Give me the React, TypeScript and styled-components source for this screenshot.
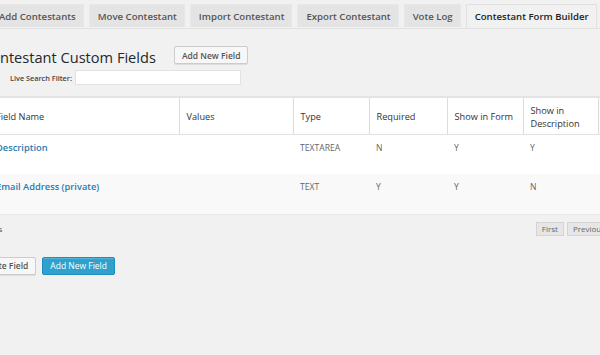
import React from "react";
import styled, { createGlobalStyle } from "styled-components";

const Global = createGlobalStyle`
  html, body { margin: 0; padding: 0; }
  body {
    background: #f1f1f1;
    font-family: "Open Sans", "Noto Sans", sans-serif;
    color: #444;
    width: 600px;
    height: 355px;
    overflow: hidden;
  }
`;

const Wrap = styled.div`
  margin-left: -30px;
  width: 690px;
`;

const TabBar = styled.div`
  display: flex;
  align-items: flex-end;
  gap: 5px;
  padding-top: 4px;
  margin-left: 20px;
  height: 24px;
  border-bottom: 1px solid #e2e2e2;
`;

const Tab = styled.div<{ $active?: boolean }>`
  height: ${(p) => (p.$active ? "24px" : "23px")};
  align-self: flex-start;
  box-sizing: border-box;
  padding: 0 7px 0 8px;
  display: flex;
  align-items: center;
  font-size: 9.6px;
  font-weight: 600;
  white-space: nowrap;
  color: ${(p) => (p.$active ? "#222" : "#555")};
  background: ${(p) => (p.$active ? "#f1f1f1" : "#e4e4e4")};
  border: 1px solid ${(p) => (p.$active ? "#e0e0e0" : "#e8e8e8")};
  border-bottom: none;
`;

const TitleRow = styled.div`
  display: flex;
  align-items: center;
  gap: 18px;
  margin-top: 14px;
  margin-left: 12px;
  height: 24px;
`;

const Title = styled.h2`
  margin: 0;
  font-size: 14.6px;
  font-weight: 400;
  color: #23282d;
  line-height: 24px;
  padding-top: 4px;
`;

const Button = styled.button<{ $primary?: boolean }>`
  font-family: "Open Sans", "Noto Sans", sans-serif;
  font-size: 8.5px;
  font-weight: ${(p) => (p.$primary ? 400 : 600)};
  height: 18px;
  padding: 0 7px;
  border-radius: 2px;
  cursor: pointer;
  color: ${(p) => (p.$primary ? "#fff" : "#555")};
  background: ${(p) => (p.$primary ? "#2ea2cc" : "#f7f7f7")};
  border: 1px solid ${(p) => (p.$primary ? "#1e8cbe" : "#ccc")};
  box-shadow: ${(p) =>
    p.$primary ? "inset 0 1px 0 rgba(120,200,230,.5)" : "0 1px 0 #ddd"};
`;

const SearchRow = styled.div`
  display: flex;
  align-items: center;
  gap: 3px;
  margin-top: 3px;
  margin-left: 40px;
`;

const Label = styled.label`
  font-size: 7.3px;
  font-weight: 600;
  color: #444;
`;

const SearchInput = styled.input`
  width: 166px;
  height: 15px;
  box-sizing: border-box;
  border: 1px solid #e2e2e2;
  background: #fff;
  padding: 0 4px;
`;

const Table = styled.table`
  margin-top: 11px;
  margin-left: 19px;
  border-collapse: collapse;
  background: #fff;
  border-top: 2px solid #e4e4e4;
  border-bottom: 1px solid #e9e9e9;
  table-layout: fixed;
  width: 640px;
`;

const Th = styled.th<{ $w: number }>`
  width: ${(p) => p.$w}px;
  box-sizing: border-box;
  height: 37px;
  padding: 2px 5px 0 7px;
  text-align: left;
  font-size: 9.2px;
  font-weight: 400;
  line-height: 13px;
  color: #333;
  border-bottom: 1px solid #e1e1e1;
  border-right: 1px solid #dcdcdc;
  vertical-align: middle;
`;

const Tr = styled.tr<{ $alt?: boolean }>`
  background: ${(p) => (p.$alt ? "#f9f9f9" : "#fff")};
`;

const Td = styled.td`
  height: 40px;
  box-sizing: border-box;
  padding: 8px 7px 0;
  vertical-align: top;
  font-size: 8.6px;
  color: #666;
  line-height: 10px;
`;

const NameLink = styled.a`
  font-size: 9.3px;
  font-weight: 600;
  color: #2a7ab0;
  text-decoration: none;
`;

const Footer = styled.div`
  display: flex;
  align-items: center;
  justify-content: space-between;
  margin-top: 7px;
  margin-left: 5px;
  width: 654px;
`;

const Count = styled.span`
  font-size: 8px;
  color: #555;
`;

const Pager = styled.div`
  display: flex;
  gap: 3px;
  margin-right: 18px;
`;

const PageBtn = styled.span`
  font-size: 8px;
  color: #666;
  background: #e6e6e6;
  border: 1px solid #d4d4d4;
  padding: 1px 5px;
  height: 10px;
  line-height: 10px;
`;

const Actions = styled.div`
  display: flex;
  gap: 6px;
  margin-top: 21px;
  margin-left: 2px;
`;

export default function App() {
  const cols = [190, 114, 76, 78, 76, 75, 31];
  return (
    <>
      <Global />
      <Wrap>
        <TabBar>
          <Tab>Add Contestants</Tab>
          <Tab>Move Contestant</Tab>
          <Tab>Import Contestant</Tab>
          <Tab>Export Contestant</Tab>
          <Tab>Vote Log</Tab>
          <Tab $active>Contestant Form Builder</Tab>
        </TabBar>
        <TitleRow>
          <Title>Contestant Custom Fields</Title>
          <Button>Add New Field</Button>
        </TitleRow>
        <SearchRow>
          <Label>Live Search Filter:</Label>
          <SearchInput />
        </SearchRow>
        <Table>
          <thead>
            <tr>
              <Th $w={cols[0]}>Field Name</Th>
              <Th $w={cols[1]}>Values</Th>
              <Th $w={cols[2]}>Type</Th>
              <Th $w={cols[3]}>Required</Th>
              <Th $w={cols[4]}>Show in Form</Th>
              <Th $w={cols[5]}>Show in Description</Th>
              <Th $w={cols[6]}></Th>
            </tr>
          </thead>
          <tbody>
            <Tr>
              <Td><NameLink>Description</NameLink></Td>
              <Td></Td>
              <Td>TEXTAREA</Td>
              <Td>N</Td>
              <Td>Y</Td>
              <Td>Y</Td>
              <Td></Td>
            </Tr>
            <Tr $alt>
              <Td><NameLink>Email Address (private)</NameLink></Td>
              <Td></Td>
              <Td>TEXT</Td>
              <Td>Y</Td>
              <Td>Y</Td>
              <Td>N</Td>
              <Td></Td>
            </Tr>
          </tbody>
        </Table>
        <Footer>
          <Count>2 items</Count>
          <Pager>
            <PageBtn>First</PageBtn>
            <PageBtn>Previous</PageBtn>
          </Pager>
        </Footer>
        <Actions>
          <Button>Delete Field</Button>
          <Button $primary>Add New Field</Button>
        </Actions>
      </Wrap>
    </>
  );
}
